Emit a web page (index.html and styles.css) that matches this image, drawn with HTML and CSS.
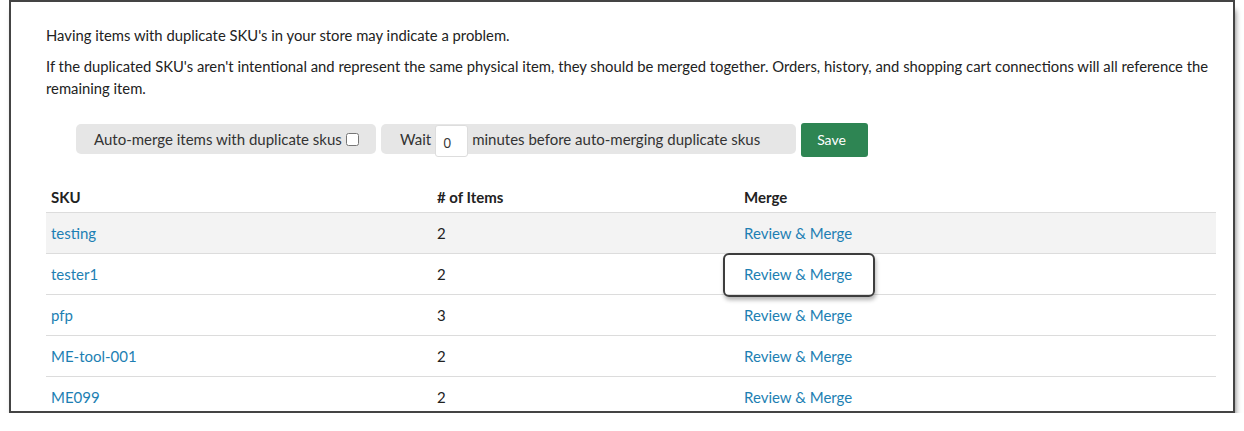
FILE: index.html
```html
<!DOCTYPE html>
<html lang="en">
<head>
<meta charset="utf-8">
<title>Duplicate SKUs</title>
<link rel="stylesheet" href="styles.css">
</head>
<body>
<div class="frame">
  <div class="content">
    <p class="intro">Having items with duplicate SKU's in your store may indicate a problem.</p>
    <p class="intro">If the duplicated SKU's aren't intentional and represent the same physical item, they should be merged together. Orders, history, and shopping cart connections will all reference the remaining item.</p>

    <div class="controls">
      <label class="pill pill-first">Auto-merge items with duplicate skus<input type="checkbox" class="check"></label>
      <div class="pill pill-wait">Wait<input type="text" class="minutes" value="0">minutes before auto-merging duplicate skus</div>
      <button class="save">Save</button>
    </div>

    <table class="skus">
      <thead>
        <tr><th class="c-sku">SKU</th><th class="c-num"># of Items</th><th class="c-merge">Merge</th></tr>
      </thead>
      <tbody>
        <tr class="shade"><td><a href="#">testing</a></td><td>2</td><td><a href="#">Review &amp; Merge</a></td></tr>
        <tr><td><a href="#">tester1</a></td><td>2</td><td class="focus-cell"><a href="#">Review &amp; Merge</a><span class="focus-ring"></span></td></tr>
        <tr><td><a href="#">pfp</a></td><td>3</td><td><a href="#">Review &amp; Merge</a></td></tr>
        <tr><td><a href="#">ME-tool-001</a></td><td>2</td><td><a href="#">Review &amp; Merge</a></td></tr>
        <tr><td><a href="#">ME099</a></td><td>2</td><td><a href="#">Review &amp; Merge</a></td></tr>
      </tbody>
    </table>
  </div>
</div>
</body>
</html>
```

FILE: styles.css
```css
* { box-sizing: border-box; }

html, body {
  margin: 0;
  padding: 0;
  background: #fff;
}

body {
  font-family: Lato, "Open Sans", "Liberation Sans", sans-serif;
  font-size: 15px;
  color: #222;
}

.frame {
  margin-left: 9px;
  width: 1226px;
  height: 413px;
  border: 2px solid #444;
  overflow: hidden;
  background: #fff;
  box-shadow: 2px 8px 6px -2px rgba(0, 0, 0, 0.6);
}

.content {
  padding: 22px 17px 0 35px;
}

.intro {
  margin: 0 0 9px;
  font-size: 14.8px;
  line-height: 22px;
}

.controls {
  display: flex;
  align-items: flex-start;
  margin: 24px 0 0 30px;
}

.pill {
  display: flex;
  align-items: flex-start;
  height: 30px;
  margin-top: 1px;
  line-height: 30px;
  background: #e6e6e6;
  border-radius: 5px;
  color: #333;
  white-space: nowrap;
}

.pill-first {
  width: 300px;
  padding-left: 18px;
}

.check {
  margin: 9px 0 0 4px;
  width: 13px;
  height: 13px;
}

.pill-wait {
  margin-left: 5px;
  width: 415px;
  padding-left: 19px;
}

.minutes {
  width: 33px;
  height: 32px;
  margin: 1px 4px 0 4px;
  padding: 2px 0 0 7px;
  border: 1px solid #ddd;
  border-radius: 3px;
  background: #fff;
  font-family: "Open Sans", "Liberation Sans", sans-serif;
  font-size: 14px;
  color: #333;
}

.save {
  margin-left: 5px;
  width: 67px;
  height: 34px;
  border: none;
  border-radius: 3px;
  background: #2e8553;
  color: #fff;
  font-family: Lato, "Liberation Sans", sans-serif;
  font-size: 14px;
  padding: 0 6px 2px 0;
}

.skus {
  margin-top: 26px;
  width: 1170px;
  border-collapse: collapse;
  table-layout: fixed;
}

.skus th {
  height: 29px;
  padding: 0 5px 1px;
  text-align: left;
  font-weight: bold;
  color: #222;
  border-bottom: 1px solid #dcdcdc;
}

.c-sku { width: 386px; }
.c-num { width: 307px; }

.skus td {
  height: 41px;
  padding: 1px 5px 0;
  border-bottom: 1px solid #dcdcdc;
  color: #222;
}

.shade td { background: #f3f3f3; }

.skus a {
  color: #1d7fb3;
  text-decoration: none;
}

.focus-cell { position: relative; }

.focus-ring {
  position: absolute;
  left: -16px;
  top: -1px;
  width: 152px;
  height: 44px;
  border: 2px solid #3d3d3d;
  border-radius: 6px;
  box-shadow: 1px 3px 4px rgba(0, 0, 0, 0.3);
  pointer-events: none;
}
```
